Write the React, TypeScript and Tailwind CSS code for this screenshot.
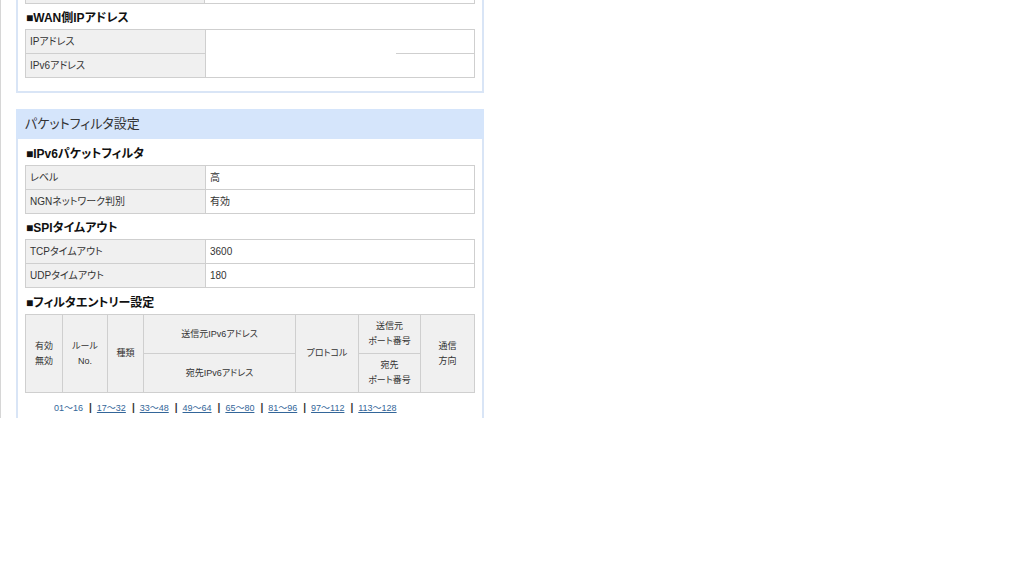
import type { ReactNode } from "react";

// 設定状態表示：WAN側IPアドレス + パケットフィルタ設定
const font = "font-['Liberation_Sans','Noto_Sans_CJK_JP',sans-serif]";
const palt = "[font-feature-settings:'palt']";

function Heading({ children, tall }: { children: ReactNode; tall?: boolean }) {
  return (
    <div
      className={`${tall ? "h-[26px] pt-[4px]" : "h-[25px] pt-[3px]"} pl-[1px] text-[12px] font-bold leading-[22px] text-[#111] ${palt}`}
    >
      {children}
    </div>
  );
}

function KvTable({ rows }: { rows: [string, string][] }) {
  return (
    <div className="border-l border-t border-[#cfcfcf]">
      {rows.map(([k, v]) => (
        <div key={k} className="flex h-[24px] text-[10px] text-[#333]">
          <div className={`flex w-[180px] shrink-0 items-center border-b border-r border-[#cfcfcf] bg-[#f0f0f0] pl-[4px] ${palt}`}>
            {k}
          </div>
          <div className={`flex flex-1 items-center border-b border-r border-[#cfcfcf] pl-[4px] ${palt}`}>{v}</div>
        </div>
      ))}
    </div>
  );
}

const pages = ["01～16", "17～32", "33～48", "49～64", "65～80", "81～96", "97～112", "113～128"];

export default function App() {
  const hd = `flex items-center justify-center border-b border-r border-[#cfcfcf] bg-[#f0f0f0] text-center text-[9px] leading-[15px] text-[#333] ${palt}`;

  return (
    <div className={`h-[418px] overflow-hidden border-l border-[#d6d6d6] pl-[15px] ${font}`}>
      {/* WAN側 */}
      <div className="w-[468px] border-x-2 border-b-2 border-[#d9e5f6] px-[7px] pb-[13px]">
        <div className="flex h-[4px]">
          <div className="w-[180px] border-b border-l border-r border-[#cfcfcf] bg-[#f0f0f0]" />
          <div className="flex-1 border-b border-r border-[#cfcfcf]" />
        </div>
        <Heading>■WAN側IPアドレス</Heading>
        <div className="flex border-l border-t border-[#cfcfcf] text-[10px] text-[#333]">
          <div className="w-[180px] shrink-0">
            <div className={`flex h-[24px] items-center border-b border-r border-[#cfcfcf] bg-[#f0f0f0] pl-[4px] ${palt}`}>
              IPアドレス
            </div>
            <div className={`flex h-[24px] items-center border-b border-r border-[#cfcfcf] bg-[#f0f0f0] pl-[4px] ${palt}`}>
              IPv6アドレス
            </div>
          </div>
          <div className="flex-1 border-b border-r border-[#cfcfcf]">
            <div className="flex h-[24px] justify-end">
              <div className="w-[78px] border-b border-[#cfcfcf]" />
            </div>
          </div>
        </div>
      </div>

      {/* パケットフィルタ設定 */}
      <div className="mt-[16px] w-[468px]">
        <div className={`flex h-[30px] items-center bg-[#d5e5fb] pl-[9px] text-[13px] text-[#333] ${palt}`}>
          パケットフィルタ設定
        </div>
        <div className="border-x-2 border-b-2 border-[#d9e5f6] px-[7px] pb-[20px]">
          <Heading tall>■IPv6パケットフィルタ</Heading>
          <KvTable
            rows={[
              ["レベル", "高"],
              ["NGNネットワーク判別", "有効"],
            ]}
          />
          <Heading>■SPIタイムアウト</Heading>
          <KvTable
            rows={[
              ["TCPタイムアウト", "3600"],
              ["UDPタイムアウト", "180"],
            ]}
          />
          <Heading tall>■フィルタエントリー設定</Heading>
          <div className="grid grid-cols-[37px_45px_36px_152px_63px_62px_54px] grid-rows-[39px_39px] border-l border-t border-[#cfcfcf]">
            <div className={`${hd} row-span-2`}>
              有効
              <br />
              無効
            </div>
            <div className={`${hd} row-span-2`}>
              ルール
              <br />
              No.
            </div>
            <div className={`${hd} row-span-2`}>種類</div>
            <div className={hd}>送信元IPv6アドレス</div>
            <div className={`${hd} row-span-2`}>プロトコル</div>
            <div className={hd}>
              送信元
              <br />
              ポート番号
            </div>
            <div className={`${hd} row-span-2`}>
              通信
              <br />
              方向
            </div>
            <div className={`${hd} col-start-4 row-start-2`}>宛先IPv6アドレス</div>
            <div className={`${hd} col-start-6 row-start-2`}>
              宛先
              <br />
              ポート番号
            </div>
          </div>
          <div className="flex pl-[29px] pt-[8px] text-[9px] leading-[14px] text-[#336699]">
            {pages.map((p, i) => (
              <span key={p} className="flex">
                {i > 0 ? <span className="pl-[6px] pr-[5px] text-[10px] font-bold text-[#333]">|</span> : null}
                <span className={i === 0 ? "" : "underline"}>{p}</span>
              </span>
            ))}
          </div>
        </div>
      </div>
    </div>
  );
}
